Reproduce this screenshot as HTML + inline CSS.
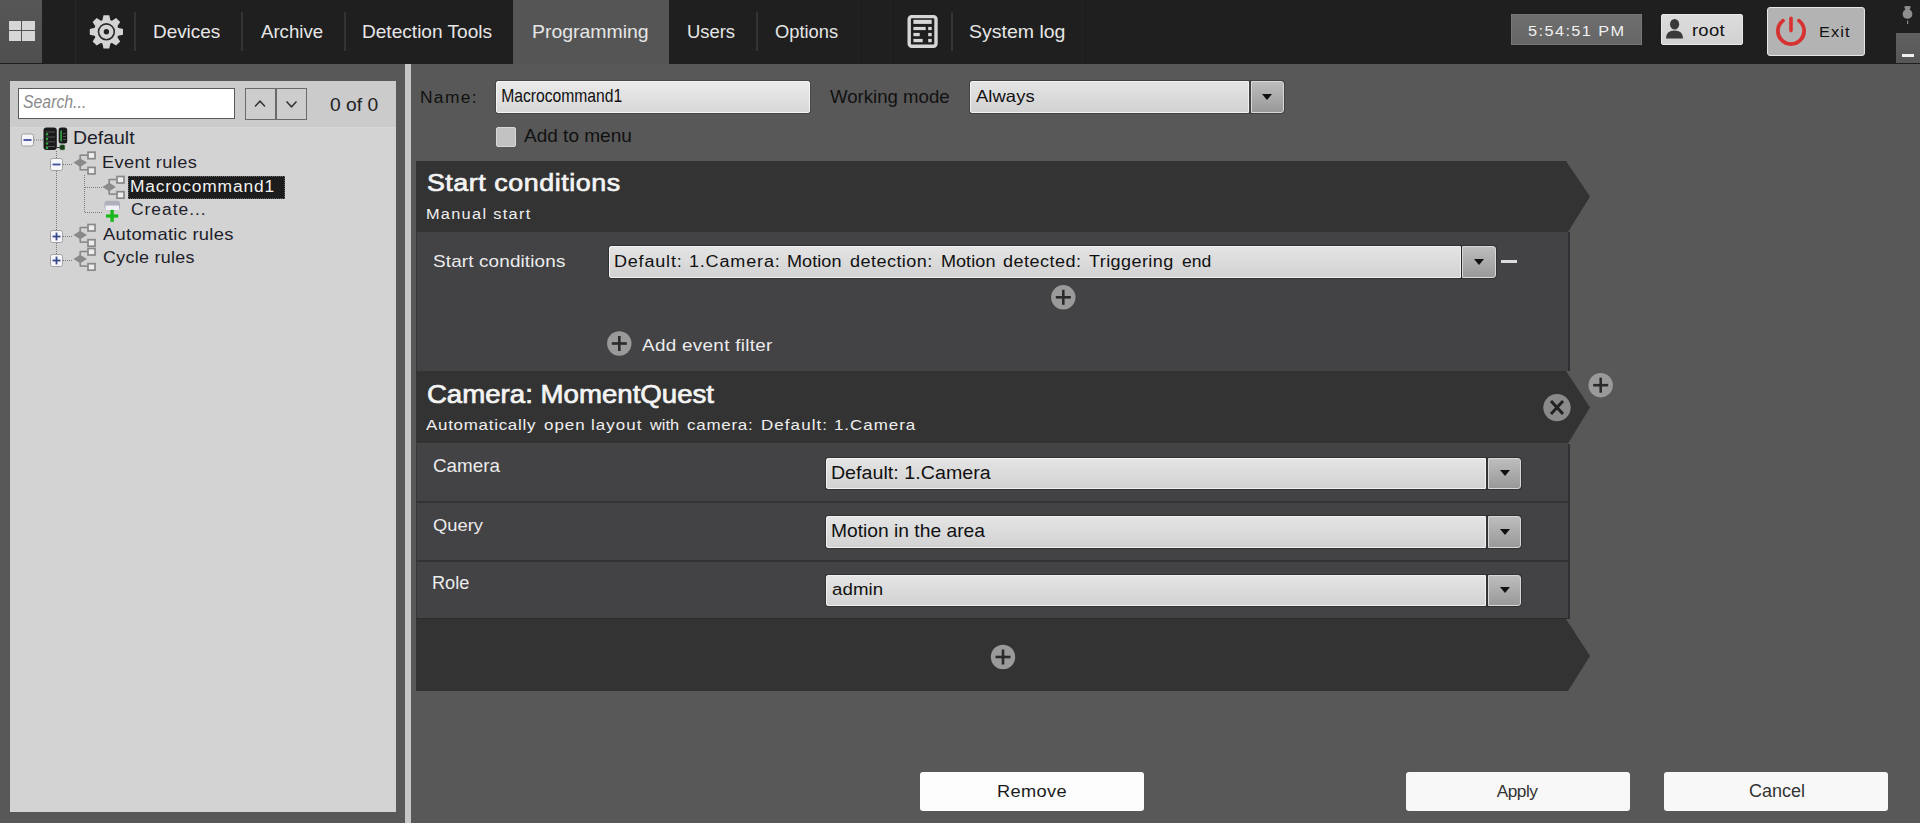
<!DOCTYPE html>
<html><head><meta charset="utf-8">
<style>
*{box-sizing:border-box;margin:0;padding:0}
html,body{width:1920px;height:823px;overflow:hidden;background:#585858;font-family:"Liberation Sans",sans-serif}
.a{position:absolute}
.t{position:absolute;white-space:nowrap;line-height:normal}
.sep{position:absolute;top:12px;width:2px;height:39px;background:#343434}
.dd{position:absolute;background:linear-gradient(#e4e4e4,#d2d2d2);border:1px solid #f2f2f2;border-radius:2px 0 0 2px;box-shadow:0 0 0 1px rgba(0,0,0,.25)}
.ddb{position:absolute;background:linear-gradient(#bdbdbd,#999);border:1px solid #d8d8d8;border-radius:0 3px 3px 0;box-shadow:0 0 0 1px rgba(0,0,0,.25)}
.tri{position:absolute;width:0;height:0;border-left:5px solid transparent;border-right:5px solid transparent;border-top:6px solid #111}
.btn{position:absolute;top:772px;height:39px;width:224px;background:#f8f8f8;border-radius:3px}
</style></head><body>
<!-- TOP BAR -->
<div class="a" style="left:0;top:0;width:1920px;height:64px;background:#1f1f1f"></div>
<div class="a" style="left:0;top:0;width:42px;height:63px;background:linear-gradient(#575757,#4e4e4e)"></div>
<div class="a" style="left:42px;top:63px;width:1px;height:1px;background:#111"></div>
<svg class="a" style="left:0;top:0" width="42" height="63">
 <rect x="9" y="21" width="12" height="9" fill="#d6d6d6"/>
 <rect x="22" y="21" width="13" height="9" fill="#d6d6d6"/>
 <rect x="9" y="31" width="12" height="10" fill="#d6d6d6"/>
 <rect x="22" y="31" width="13" height="10" fill="#d6d6d6"/>
</svg>
<div class="a" style="left:75px;top:0;width:1px;height:64px;background:#262626"></div>
<svg class="a" style="left:86px;top:11px" width="42" height="42" viewBox="0 0 42 42">
 <g transform="translate(20.4,20.8)" fill="#d4d4d4">
  <circle r="12.3"/>
  <g id="tooth"><path d="M-4.2 -10.5 L-2.9 -16.6 L2.9 -16.6 L4.2 -10.5 Z"/></g>
  <use href="#tooth" transform="rotate(45)"/><use href="#tooth" transform="rotate(90)"/><use href="#tooth" transform="rotate(135)"/>
  <use href="#tooth" transform="rotate(180)"/><use href="#tooth" transform="rotate(225)"/><use href="#tooth" transform="rotate(270)"/><use href="#tooth" transform="rotate(315)"/>
  <circle r="7.9" fill="none" stroke="#2a2a2a" stroke-width="1.6"/>
  <circle r="2.7" fill="#222"/>
 </g>
</svg>
<div class="sep" style="left:134px"></div>
<div class="sep" style="left:241px"></div>
<div class="sep" style="left:344px"></div>
<div class="a" style="left:513px;top:0;width:156px;height:64px;background:#555"></div>
<div class="sep" style="left:756px"></div>
<div class="a" style="left:858px;top:0;width:1px;height:64px;background:#242424"></div>
<div class="a" style="left:890px;top:0;width:1px;height:64px;background:#242424"></div>
<svg class="a" style="left:900px;top:8px" width="45" height="45">
 <rect x="9.2" y="8.6" width="26.8" height="29.6" rx="2.5" fill="none" stroke="#d6d6d6" stroke-width="3.4"/>
 <rect x="13.4" y="11.8" width="18.3" height="4.1" fill="#d6d6d6"/>
 <rect x="13.4" y="18.9" width="12.3" height="3.2" fill="#d6d6d6"/>
 <rect x="28.2" y="18.9" width="3.5" height="3.2" fill="#d6d6d6"/>
 <rect x="13.4" y="24.9" width="6.3" height="3.3" fill="#d6d6d6"/>
 <rect x="28.2" y="24.9" width="3.5" height="3.3" fill="#d6d6d6"/>
 <rect x="13.4" y="30.9" width="9.3" height="3.3" fill="#d6d6d6"/>
 <rect x="28.2" y="30.9" width="3.5" height="3.3" fill="#d6d6d6"/>
</svg>
<div class="sep" style="left:951px"></div>
<div class="a" style="left:1082px;top:0;width:1px;height:64px;background:#242424"></div>
<!-- clock -->
<div class="a" style="left:1511px;top:14px;width:131px;height:31px;background:linear-gradient(#6e6e6e,#666);border:1px solid #777"></div>
<!-- root -->
<div class="a" style="left:1661px;top:14px;width:82px;height:31px;background:linear-gradient(#dcdcdc,#d2d2d2);border:1px solid #e8e8e8;border-radius:2px"></div>
<svg class="a" style="left:1666px;top:19px" width="18" height="20">
 <ellipse cx="8.6" cy="5.2" rx="4.6" ry="5.2" fill="#3a3a3a"/>
 <path d="M0 19.5 Q0 11.5 8.6 11.5 Q17 11.5 17 19.5 Z" fill="#3a3a3a"/>
</svg>
<!-- exit -->
<div class="a" style="left:1767px;top:7px;width:98px;height:49px;background:#b3b3b3;border:1px solid #e6e6e6;border-radius:3px"></div>
<svg class="a" style="left:1773px;top:13px" width="36" height="36">
 <path d="M10 7.6 A13.1 13.1 0 1 0 26 7.6" fill="none" stroke="#d63030" stroke-width="3.7" stroke-linecap="round"/>
 <line x1="18" y1="5.2" x2="18" y2="17.6" stroke="#d63030" stroke-width="3.6" stroke-linecap="round"/>
</svg>
<svg class="a" style="left:1900px;top:5px" width="16" height="22">
 <path d="M4.5 1.2 Q7.5 0.6 10.5 1.2 Q11 3 9.5 4.6 Q13 6.5 12.2 10.5 Q11.5 13.5 7.5 13.8 Q3.5 13.5 2.8 10.5 Q2 6.5 5.5 4.6 Q4 3 4.5 1.2 Z" fill="#8e8e8e"/>
 <rect x="7" y="15.5" width="1.2" height="3.5" fill="#888"/>
</svg>
<div class="a" style="left:1896px;top:33px;width:24px;height:30px;background:linear-gradient(#606060,#575757)"></div>
<div class="a" style="left:1902px;top:54px;width:12px;height:3px;background:#f0f0f0"></div>

<!-- LEFT PANEL -->
<div class="a" style="left:10px;top:81px;width:386px;height:731px;background:#d3d3d3"></div>
<div class="a" style="left:10px;top:81px;width:386px;height:47px;background:#cbcbcb;border-bottom:1px solid #d6d6d6"></div>
<div class="a" style="left:18px;top:88px;width:217px;height:31px;background:#fff;border:1px solid #5a5a5a"></div>
<div class="a" style="left:245px;top:88px;width:31px;height:32px;background:#cdcdcd;border:1px solid #6a6a6a"></div>
<div class="a" style="left:275px;top:88px;width:32px;height:32px;background:#cdcdcd;border:1px solid #6a6a6a;border-left-width:2px"></div>
<svg class="a" style="left:245px;top:88px" width="62" height="32">
 <path d="M10 18.5 L15 13.2 L20 18.5" fill="none" stroke="#333" stroke-width="1.5"/>
 <path d="M41.5 13.5 L46.5 18.8 L51.5 13.5" fill="none" stroke="#333" stroke-width="1.5"/>
</svg>
<!-- tree -->
<svg class="a" style="left:10px;top:127px" width="386" height="150">
 <defs>
  <g id="rule">
   <line x1="7.2" y1="3.5" x2="7.2" y2="19" stroke="#888" stroke-width="1.6"/>
   <line x1="7.2" y1="4" x2="14.5" y2="4" stroke="#888" stroke-width="1.6"/>
   <line x1="7.2" y1="18.6" x2="14.5" y2="18.6" stroke="#888" stroke-width="1.6"/>
   <path d="M0.4 11.4 L7.2 7.2 L14 11.4 L7.2 15.8 Z" fill="#8a8a8a"/>
   <rect x="15" y="1" width="7" height="6.5" fill="#eee" stroke="#888" stroke-width="1.7"/>
   <rect x="15" y="16.2" width="7" height="6.5" fill="#eee" stroke="#888" stroke-width="1.7"/>
  </g>
  <g id="minus"><rect x="0.5" y="0.5" width="12" height="12" rx="2" fill="#f6f6fa" stroke="#a0a0a0"/><rect x="2.5" y="5.6" width="8" height="1.8" fill="#4050a0"/></g>
  <g id="plus"><rect x="0.5" y="0.5" width="12" height="12" rx="2" fill="#f6f6fa" stroke="#a0a0a0"/><rect x="2.5" y="5.6" width="8" height="1.8" fill="#3a4a8a"/><rect x="5.6" y="2.6" width="1.8" height="7.8" fill="#3a4a8a"/></g>
 </defs>
 <g stroke="#7a7a7a" stroke-width="1" stroke-dasharray="1 1" fill="none">
  <line x1="24" y1="13" x2="33" y2="13"/>
  <line x1="46.5" y1="24" x2="46.5" y2="31"/>
  <line x1="46.5" y1="44" x2="46.5" y2="103"/>
  <line x1="46.5" y1="116" x2="46.5" y2="127"/>
  <line x1="53" y1="37.5" x2="63" y2="37.5"/>
  <line x1="53" y1="109.5" x2="63" y2="109.5"/>
  <line x1="53" y1="133.5" x2="63" y2="133.5"/>
  <line x1="74.5" y1="48" x2="74.5" y2="85.5"/>
  <line x1="75" y1="60.5" x2="92" y2="60.5"/>
  <line x1="75" y1="85.5" x2="92" y2="85.5"/>
 </g>
 <use href="#minus" x="11" y="6.5"/>
 <use href="#minus" x="40" y="31"/>
 <use href="#plus" x="40" y="103"/>
 <use href="#plus" x="40" y="127"/>
 <use href="#rule" x="63" y="24.2"/>
 <use href="#rule" x="92" y="48.5"/>
 <use href="#rule" x="63" y="96.5"/>
 <use href="#rule" x="63" y="120.5"/>
 <!-- server -->
 <rect x="33.5" y="0.5" width="13.3" height="22.5" rx="3" fill="#1a1a1a"/>
 <g fill="#555"><rect x="36" y="4.5" width="9" height="1"/><rect x="36" y="9.5" width="9" height="1"/><rect x="36" y="14.3" width="9" height="1"/><rect x="36" y="19" width="9" height="1"/></g>
 <g fill="#34a843"><circle cx="37" cy="7.2" r="1.2"/><circle cx="37" cy="12" r="1.2"/><circle cx="37" cy="16.6" r="1.2"/><circle cx="37" cy="21" r="1.2"/></g>
 <rect x="48.7" y="0.6" width="8.5" height="16" rx="2.5" fill="#1a1a1a"/>
 <rect x="50.3" y="3.5" width="1.6" height="11" fill="#34a843"/>
 <g fill="#555"><rect x="53" y="6" width="3" height="1"/><rect x="53" y="9" width="3" height="1"/><rect x="53" y="12" width="3" height="1"/></g>
 <line x1="46" y1="20.5" x2="51" y2="20.5" stroke="#333" stroke-width="1"/>
 <rect x="50" y="18" width="4.6" height="4.7" rx="1" fill="#1a3a1a" stroke="#2a6a2a" stroke-width="0.8"/>
 <!-- create icon -->
 <rect x="94.4" y="73.7" width="15.6" height="9.5" rx="3" fill="#aeb1bc"/>
 <rect x="95.5" y="78.5" width="13.5" height="4.5" fill="#eef0f6"/>
 <rect x="96" y="87.4" width="12.2" height="3.2" fill="#18b818"/>
 <rect x="100.4" y="82.9" width="3.4" height="12" fill="#18b818"/>
</svg>
<!-- selection -->
<div class="a" style="left:128px;top:176px;width:157px;height:23px;background:#1c1c1c;outline:1px dotted #666;outline-offset:-1px"></div>

<!-- vertical splitter -->
<div class="a" style="left:405px;top:64px;width:6px;height:759px;background:#c6c6c6"></div>

<!-- NAME ROW -->
<div class="a" style="left:496px;top:81px;width:314px;height:32px;background:linear-gradient(#eaeaea,#d8d8d8);border:1px solid #f4f4f4;border-radius:2px;box-shadow:0 0 0 1px rgba(0,0,0,.2)"></div>
<div class="dd" style="left:970px;top:81px;width:279px;height:32px"></div>
<div class="ddb" style="left:1251px;top:81px;width:33px;height:32px"></div>
<div class="tri" style="left:1262px;top:94px"></div>
<div class="a" style="left:496px;top:127px;width:20px;height:20px;background:#c2c2c2;border:1px solid #d8d8d8;border-radius:2px"></div>

<!-- START CONDITIONS -->
<svg class="a" style="left:0;top:0" width="1920" height="823">
 <polygon points="416,161 1566,161 1590,196.5 1568,232 416,232" fill="#333333"/>
 <polygon points="416,371 1566,371 1590,407.5 1568,443.5 416,443.5" fill="#333333"/>
 <polygon points="416,619 1566,619 1590,656 1568,691 416,691" fill="#333333"/>
</svg>
<div class="a" style="left:416px;top:232px;width:1154px;height:139px;background:#434346;border-left:1px solid #36363a;border-right:2px solid #303034"></div>
<div class="dd" style="left:609px;top:246px;width:852px;height:32px"></div>
<div class="ddb" style="left:1462px;top:246px;width:34px;height:32px"></div>
<div class="tri" style="left:1474px;top:259px"></div>
<div class="a" style="left:1501px;top:259.5px;width:16px;height:3px;background:#dcdcdc"></div>
<svg class="a" style="left:0;top:0" width="1920" height="823">
 <defs>
  <g id="pc"><circle r="12.2" fill="#9a9a9a"/><rect x="-7.5" y="-1.3" width="15" height="2.6" fill="#2a2a2a"/><rect x="-1.3" y="-7.5" width="2.6" height="15" fill="#2a2a2a"/></g>
 </defs>
 <use href="#pc" x="1063.3" y="297.3"/>
 <use href="#pc" x="619.3" y="343.5"/>
 <use href="#pc" x="1600.7" y="385.2"/>
 <use href="#pc" x="1003" y="657"/>
 <g transform="translate(1557,407.6)"><circle r="13.7" fill="#8a8a8a"/><path d="M-6 -6.5 L6 6.5 M6 -6.5 L-6 6.5" stroke="#222" stroke-width="3"/></g>
</svg>

<!-- CAMERA ROWS -->
<div class="a" style="left:416px;top:443.5px;width:1154px;height:175.5px;background:#434346;border-left:1px solid #36363a;border-right:2px solid #303034;border-bottom:1.5px solid #2c2c30"></div>
<div class="a" style="left:416px;top:501px;width:1154px;height:2px;background:#333"></div>
<div class="a" style="left:416px;top:560px;width:1154px;height:2px;background:#333"></div>
<div class="dd" style="left:826px;top:457.5px;width:660px;height:31.5px"></div>
<div class="ddb" style="left:1488px;top:457.5px;width:33px;height:31.5px"></div>
<div class="tri" style="left:1499.5px;top:470px"></div>
<div class="dd" style="left:826px;top:516px;width:660px;height:31.5px"></div>
<div class="ddb" style="left:1488px;top:516px;width:33px;height:31.5px"></div>
<div class="tri" style="left:1499.5px;top:528.5px"></div>
<div class="dd" style="left:826px;top:574.5px;width:660px;height:31.5px"></div>
<div class="ddb" style="left:1488px;top:574.5px;width:33px;height:31.5px"></div>
<div class="tri" style="left:1499.5px;top:587px"></div>

<!-- BUTTONS -->
<div class="btn" style="left:920px;background:#fdfdfd"></div>
<div class="btn" style="left:1406px"></div>
<div class="btn" style="left:1664px"></div>

<div class="t" style="left:152.50px;top:21.60px;font-size:18.17px;letter-spacing:0.000px;color:#e6e6e6;font-weight:normal;font-style:normal;transform:scaleX(1.0426);transform-origin:1.00px 0">Devices</div>
<div class="t" style="left:260.80px;top:21.60px;font-size:18.17px;letter-spacing:0.000px;color:#e6e6e6;font-weight:normal;font-style:normal;transform:scaleX(1.0257);transform-origin:0.00px 0">Archive</div>
<div class="t" style="left:362.40px;top:21.60px;font-size:18.17px;letter-spacing:0.000px;color:#e6e6e6;font-weight:normal;font-style:normal;transform:scaleX(1.0516);transform-origin:1.00px 0">Detection Tools</div>
<div class="t" style="left:532.00px;top:21.60px;font-size:18.17px;letter-spacing:0.000px;color:#e6e6e6;font-weight:normal;font-style:normal;transform:scaleX(1.0713);transform-origin:1.00px 0">Programming</div>
<div class="t" style="left:686.50px;top:21.60px;font-size:18.17px;letter-spacing:0.000px;color:#e6e6e6;font-weight:normal;font-style:normal;transform:scaleX(1.0144);transform-origin:1.00px 0">Users</div>
<div class="t" style="left:774.60px;top:21.60px;font-size:18.17px;letter-spacing:0.000px;color:#e6e6e6;font-weight:normal;font-style:normal;transform:scaleX(1.0081);transform-origin:0.00px 0">Options</div>
<div class="t" style="left:969.30px;top:21.60px;font-size:18.17px;letter-spacing:0.000px;color:#e6e6e6;font-weight:normal;font-style:normal;transform:scaleX(1.0732);transform-origin:0.00px 0">System log</div>
<div class="t" style="left:1527.80px;top:22.90px;font-size:14.83px;letter-spacing:1.287px;color:#f0f0f0;font-weight:normal;font-style:normal;transform:scaleX(1.1000);transform-origin:0.00px 0">5:54:51 PM</div>
<div class="t" style="left:1692.00px;top:20.90px;font-size:16.77px;letter-spacing:0.294px;color:#111111;font-weight:normal;font-style:normal;transform:scaleX(1.1000);transform-origin:1.00px 0">root</div>
<div class="t" style="left:1819.40px;top:24.40px;font-size:14.83px;letter-spacing:1.020px;color:#111111;font-weight:normal;font-style:normal;transform:scaleX(1.1000);transform-origin:1.00px 0">Exit</div>
<div class="t" style="left:22.50px;top:90.70px;font-size:19.04px;letter-spacing:0.000px;color:#8a8a8a;font-weight:normal;font-style:italic;transform:scaleX(0.8311);transform-origin:0.00px 0">Search...</div>
<div class="t" style="left:329.50px;top:94.00px;font-size:19.04px;letter-spacing:0.000px;color:#222222;font-weight:normal;font-style:normal;transform:scaleX(1.0100);transform-origin:0.00px 0">0 of 0</div>
<div class="t" style="left:73.20px;top:127.70px;font-size:17.88px;letter-spacing:-0.000px;color:#1e1e2a;font-weight:normal;font-style:normal;transform:scaleX(1.0894);transform-origin:1.00px 0">Default</div>
<div class="t" style="left:101.90px;top:152.80px;font-size:16.57px;letter-spacing:0.352px;color:#1e1e2a;font-weight:normal;font-style:normal;transform:scaleX(1.1000);transform-origin:1.00px 0">Event rules</div>
<div class="t" style="left:130.00px;top:177.70px;font-size:15.84px;letter-spacing:0.733px;color:#f2f2f2;font-weight:normal;font-style:normal;transform:scaleX(1.1000);transform-origin:1.00px 0">Macrocommand1</div>
<div class="t" style="left:131.40px;top:201.40px;font-size:15.84px;letter-spacing:0.894px;color:#1e1e2a;font-weight:normal;font-style:normal;transform:scaleX(1.1000);transform-origin:0.00px 0">Create...</div>
<div class="t" style="left:103.00px;top:224.70px;font-size:16.72px;letter-spacing:0.244px;color:#1e1e2a;font-weight:normal;font-style:normal;transform:scaleX(1.1000);transform-origin:0.00px 0">Automatic rules</div>
<div class="t" style="left:103.00px;top:248.40px;font-size:16.28px;letter-spacing:0.278px;color:#1e1e2a;font-weight:normal;font-style:normal;transform:scaleX(1.1000);transform-origin:0.00px 0">Cycle rules</div>
<div class="t" style="left:419.60px;top:89.20px;font-size:15.84px;letter-spacing:1.240px;color:#111111;font-weight:normal;font-style:normal;transform:scaleX(1.1000);transform-origin:1.00px 0">Name:</div>
<div class="t" style="left:500.80px;top:84.80px;font-size:18.60px;letter-spacing:0.000px;color:#111111;font-weight:normal;font-style:normal;transform:scaleX(0.8426);transform-origin:1.00px 0">Macrocommand1</div>
<div class="t" style="left:830.00px;top:86.50px;font-size:17.73px;letter-spacing:0.000px;color:#111111;font-weight:normal;font-style:normal;transform:scaleX(1.0504);transform-origin:0.00px 0">Working mode</div>
<div class="t" style="left:976.20px;top:86.80px;font-size:16.72px;letter-spacing:0.071px;color:#111111;font-weight:normal;font-style:normal;transform:scaleX(1.1000);transform-origin:0.00px 0">Always</div>
<div class="t" style="left:523.50px;top:126.40px;font-size:17.59px;letter-spacing:0.000px;color:#111111;font-weight:normal;font-style:normal;transform:scaleX(1.0819);transform-origin:0.00px 0">Add to menu</div>
<div class="t" style="left:427.20px;top:168.80px;font-size:24.42px;letter-spacing:0.496px;color:#f4f4f4;font-weight:normal;font-style:normal;-webkit-text-stroke:0.7px #f4f4f4;transform:scaleX(1.1000);transform-origin:1.00px 0">Start conditions</div>
<div class="t" style="left:426.00px;top:205.90px;font-size:14.83px;letter-spacing:1.204px;color:#f0f0f0;font-weight:normal;font-style:normal;transform:scaleX(1.1000);transform-origin:1.00px 0">Manual start</div>
<div class="t" style="left:432.70px;top:251.00px;font-size:17.15px;letter-spacing:0.144px;color:#ececec;font-weight:normal;font-style:normal;transform:scaleX(1.1000);transform-origin:0.00px 0">Start conditions</div>
<div class="t" style="left:613.70px;top:251.50px;font-size:16.42px;letter-spacing:0.730px;color:#111111;font-weight:normal;font-style:normal;transform:scaleX(1.1000);transform-origin:1.00px 0">Default:</div>
<div class="t" style="left:689.00px;top:251.50px;font-size:16.42px;letter-spacing:0.757px;color:#111111;font-weight:normal;font-style:normal;transform:scaleX(1.1000);transform-origin:1.00px 0">1.Camera:</div>
<div class="t" style="left:787.30px;top:251.50px;font-size:16.42px;letter-spacing:0.085px;color:#111111;font-weight:normal;font-style:normal;transform:scaleX(1.1000);transform-origin:1.00px 0">Motion</div>
<div class="t" style="left:850.00px;top:251.50px;font-size:16.42px;letter-spacing:0.410px;color:#111111;font-weight:normal;font-style:normal;transform:scaleX(1.1000);transform-origin:0.00px 0">detection:</div>
<div class="t" style="left:940.70px;top:251.50px;font-size:16.42px;letter-spacing:0.067px;color:#111111;font-weight:normal;font-style:normal;transform:scaleX(1.1000);transform-origin:1.00px 0">Motion</div>
<div class="t" style="left:1003.30px;top:251.50px;font-size:16.42px;letter-spacing:0.439px;color:#111111;font-weight:normal;font-style:normal;transform:scaleX(1.1000);transform-origin:0.00px 0">detected:</div>
<div class="t" style="left:1089.20px;top:251.50px;font-size:16.42px;letter-spacing:0.370px;color:#111111;font-weight:normal;font-style:normal;transform:scaleX(1.1000);transform-origin:0.00px 0">Triggering</div>
<div class="t" style="left:1181.70px;top:251.50px;font-size:16.42px;letter-spacing:-0.000px;color:#111111;font-weight:normal;font-style:normal;transform:scaleX(1.0679);transform-origin:0.00px 0">end</div>
<div class="t" style="left:641.70px;top:334.80px;font-size:17.15px;letter-spacing:0.279px;color:#ececec;font-weight:normal;font-style:normal;transform:scaleX(1.1000);transform-origin:0.00px 0">Add event filter</div>
<div class="t" style="left:427.40px;top:379.70px;font-size:25.44px;letter-spacing:0.000px;color:#f4f4f4;font-weight:normal;font-style:normal;-webkit-text-stroke:0.7px #f4f4f4;transform:scaleX(1.0861);transform-origin:1.00px 0">Camera: MomentQuest</div>
<div class="t" style="left:426.10px;top:416.40px;font-size:15.41px;letter-spacing:0.658px;color:#f0f0f0;font-weight:normal;font-style:normal;transform:scaleX(1.1000);transform-origin:0.00px 0">Automatically</div>
<div class="t" style="left:543.90px;top:416.40px;font-size:15.41px;letter-spacing:0.865px;color:#f0f0f0;font-weight:normal;font-style:normal;transform:scaleX(1.1000);transform-origin:0.00px 0">open</div>
<div class="t" style="left:591.00px;top:416.40px;font-size:15.41px;letter-spacing:0.950px;color:#f0f0f0;font-weight:normal;font-style:normal;transform:scaleX(1.1000);transform-origin:1.00px 0">layout</div>
<div class="t" style="left:649.80px;top:416.40px;font-size:15.41px;letter-spacing:-0.000px;color:#f0f0f0;font-weight:normal;font-style:normal;transform:scaleX(1.0608);transform-origin:-1.00px 0">with</div>
<div class="t" style="left:686.90px;top:416.40px;font-size:15.41px;letter-spacing:0.689px;color:#f0f0f0;font-weight:normal;font-style:normal;transform:scaleX(1.1000);transform-origin:0.00px 0">camera:</div>
<div class="t" style="left:761.10px;top:416.40px;font-size:15.41px;letter-spacing:1.008px;color:#f0f0f0;font-weight:normal;font-style:normal;transform:scaleX(1.1000);transform-origin:1.00px 0">Default:</div>
<div class="t" style="left:833.50px;top:416.40px;font-size:15.41px;letter-spacing:0.894px;color:#f0f0f0;font-weight:normal;font-style:normal;transform:scaleX(1.1000);transform-origin:1.00px 0">1.Camera</div>
<div class="t" style="left:432.80px;top:456.40px;font-size:17.73px;letter-spacing:0.000px;color:#ececec;font-weight:normal;font-style:normal;transform:scaleX(1.0639);transform-origin:0.00px 0">Camera</div>
<div class="t" style="left:830.70px;top:462.80px;font-size:17.88px;letter-spacing:0.023px;color:#111111;font-weight:normal;font-style:normal;transform:scaleX(1.1000);transform-origin:1.00px 0">Default: 1.Camera</div>
<div class="t" style="left:432.80px;top:514.75px;font-size:17.37px;letter-spacing:-0.000px;color:#ececec;font-weight:normal;font-style:normal;transform:scaleX(1.0569);transform-origin:0.00px 0">Query</div>
<div class="t" style="left:830.70px;top:520.90px;font-size:17.59px;letter-spacing:0.000px;color:#111111;font-weight:normal;font-style:normal;transform:scaleX(1.0948);transform-origin:1.00px 0">Motion in the area</div>
<div class="t" style="left:431.80px;top:573.30px;font-size:17.44px;letter-spacing:0.000px;color:#ececec;font-weight:normal;font-style:normal;transform:scaleX(1.0420);transform-origin:1.00px 0">Role</div>
<div class="t" style="left:832.00px;top:580.20px;font-size:16.99px;letter-spacing:0.055px;color:#111111;font-weight:normal;font-style:normal;transform:scaleX(1.1000);transform-origin:0.00px 0">admin</div>
<div class="t" style="left:997.20px;top:781.60px;font-size:16.57px;letter-spacing:0.362px;color:#1a1a1a;font-weight:normal;font-style:normal;transform:scaleX(1.1000);transform-origin:1.00px 0">Remove</div>
<div class="t" style="left:1496.70px;top:780.60px;font-size:17.26px;letter-spacing:-0.481px;color:#333333;font-weight:normal;font-style:normal">Apply</div>
<div class="t" style="left:1748.50px;top:780.90px;font-size:17.44px;letter-spacing:0.000px;color:#333333;font-weight:normal;font-style:normal;transform:scaleX(1.0336);transform-origin:0.00px 0">Cancel</div>
</body></html>
